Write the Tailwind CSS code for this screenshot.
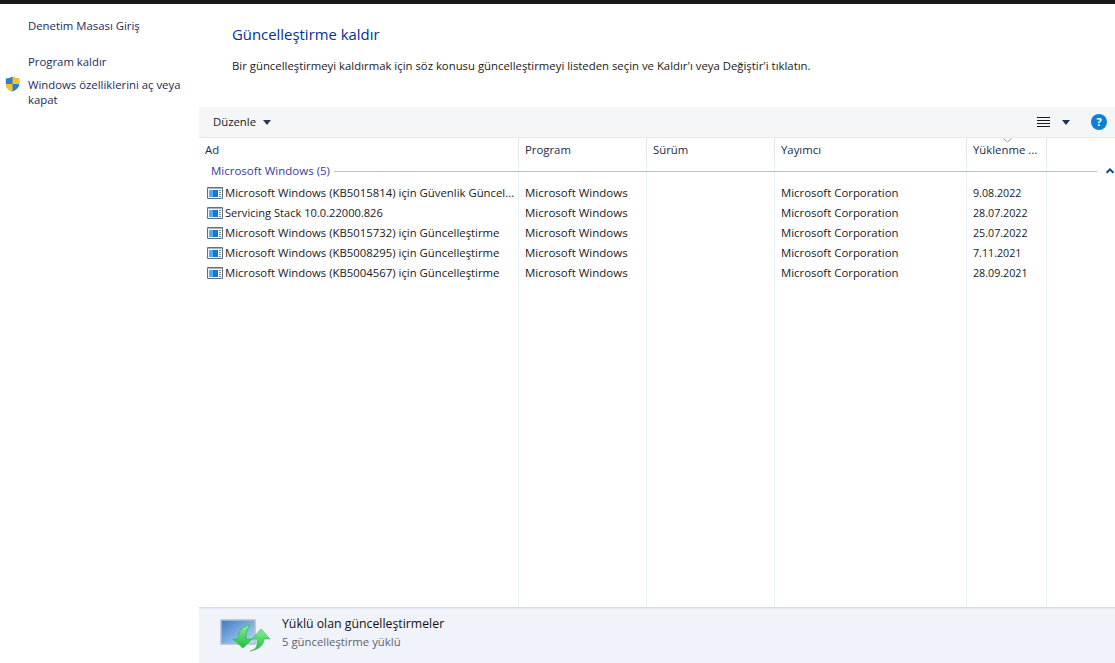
<!DOCTYPE html>
<html lang="tr">
<head>
<meta charset="UTF-8">
<title>Güncelleştirme kaldır</title>
<script src="https://cdn.jsdelivr.net/npm/@tailwindcss/browser@4"></script>
</head>
<body class="w-[1115px] h-[663px] overflow-hidden bg-white font-['Open_Sans','Noto_Sans',sans-serif] text-[11.35px] text-[#1a1a1a]">
<svg width="0" height="0" class="absolute">
  <symbol id="upd" viewBox="0 0 16 12">
    <path d="M0.5 0.5H15.5V11.5H0.5Z" fill="#f7f8fa" stroke="#62707e"/>
    <path d="M1 1.5h14" stroke="#aab4be"/>
    <rect x="2" y="3" width="9" height="7" fill="#1477d4"/>
    <rect x="2" y="3" width="4" height="7" fill="#58a8ea"/>
    <path d="M12 3h2v1h-2zM12 5h2v1h-2zM12 7h2v1h-2zM12 9h2v1h-2z" fill="#7d8b98"/>
  </symbol>
</svg>
<div class="h-1 bg-[#191919]"></div>
<div class="flex h-[659px]">
  <aside class="w-[199px] shrink-0 pl-[28px] pr-3 pt-[14px] text-[#1c2a5c]">
    <div class="leading-[16px]">Denetim Masası Giriş</div>
    <div class="mt-[20px] leading-[16px]">Program kaldır</div>
    <div class="relative mt-[7px] leading-[15px]">
      <svg class="absolute left-[-23px] top-[-1px]" width="15" height="16" viewBox="0 0 15 16">
        <path d="M7.5 0.5C5.5 1.8 3 2.4 0.8 2.4V8c0 3.6 3 6 6.7 7.5 3.7-1.5 6.7-3.9 6.7-7.5V2.4C12 2.4 9.5 1.8 7.5 0.5Z" fill="#2a7fd4"/>
        <path d="M7.5 0.5C9.5 1.8 12 2.4 14.2 2.4V8H7.5Z" fill="#f7c325"/>
        <path d="M7.5 8H0.8c0 3.6 3 6 6.7 7.5Z" fill="#f7c325"/>
      </svg>
      Windows özelliklerini aç veya kapat
    </div>
  </aside>
  <main class="flex-1 flex flex-col min-w-0">
    <header class="h-[103px] pl-[33px] pt-[19px] shrink-0">
      <h1 class="text-[14.9px] leading-[22px] text-[#003399]">Güncelleştirme kaldır</h1>
      <p class="mt-[13px] leading-[16px] text-[#1a1a1a]">Bir güncelleştirmeyi kaldırmak için söz konusu güncelleştirmeyi listeden seçin ve Kaldır'ı veya Değiştir'i tıklatın.</p>
    </header>
    <div class="h-[31px] shrink-0 bg-[#f5f6f7] border-b border-[#e8e9eb] flex items-center pl-[14px] pr-[8px]">
      <span>Düzenle</span>
      <span class="ml-[7px] w-0 h-0 border-x-[4.5px] border-x-transparent border-t-[5px] border-t-[#2a3a55]"></span>
      <svg class="ml-auto" width="13" height="11" viewBox="0 0 13 11" stroke="#1a1a1a"><path d="M0 .5h13M0 3.5h13M0 6.5h13M0 9.5h13"/></svg>
      <span class="ml-[12px] w-0 h-0 border-x-[4.5px] border-x-transparent border-t-[5px] border-t-[#1c3357]"></span>
      <span class="ml-[21px] w-4 h-4 rounded-full bg-[#0f7fd6] text-white text-[11px] font-bold leading-4 text-center">?</span>
    </div>
    <section class="relative flex-1 min-h-0">
      <div class="absolute inset-0 grid grid-cols-[320px_128px_128px_192px_80px_1fr]">
        <div class="border-r border-[#e9f0f8]"></div>
        <div class="border-r border-[#e9f0f8]"></div>
        <div class="border-r border-[#e9f0f8]"></div>
        <div class="border-r border-[#e9f0f8]"></div>
        <div class="border-r border-[#e9f0f8]"></div>
      </div>
      <div class="relative grid grid-cols-[320px_128px_128px_192px_80px_1fr] h-[23px] leading-[24px] text-[#1c2a4c] bg-white">
        <div class="pl-[6px] border-r border-[#e5e5e5]">Ad</div>
        <div class="pl-[6px] border-r border-[#e5e5e5]">Program</div>
        <div class="pl-[6px] border-r border-[#e5e5e5]">Sürüm</div>
        <div class="pl-[6px] border-r border-[#e5e5e5]">Yayımcı</div>
        <div class="relative pl-[6px] border-r border-[#e5e5e5]">Yüklenme ...
          <svg class="absolute left-[36px] top-0" width="9" height="5" viewBox="0 0 9 5" fill="none" stroke="#9a9a9a"><path d="M.5.5l4 3.5 4-3.5"/></svg>
        </div>
        <div></div>
      </div>
      <div class="relative h-[20px] flex items-center pl-[12px] pr-[18px] text-[11.5px] text-[#3b3b99]">
        <span>Microsoft Windows (5)</span>
        <span class="ml-[4px] flex-1 h-px bg-[#b9bfdb]"></span>
        <svg class="absolute right-[1px] top-[7px]" width="8" height="6" viewBox="0 0 8 6" fill="none" stroke="#12408f" stroke-width="2"><path d="M.6 4.8L4 1.4l3.4 3.4"/></svg>
      </div>
      <div class="relative mt-[2px]">
        <div class="grid grid-cols-[320px_128px_128px_192px_80px_1fr] h-[20px] leading-[20px]">
          <div class="flex items-center pl-[8px]"><svg class="shrink-0 mr-[2px]" width="16" height="12"><use href="#upd"/></svg><span class="truncate pr-[2px]">Microsoft Windows (KB5015814) için Güvenlik Güncel...</span></div>
          <div class="pl-[6px] text-[11.5px]">Microsoft Windows</div><div></div>
          <div class="pl-[6px] text-[11.4px]">Microsoft Corporation</div>
          <div class="pl-[6px] text-[10.7px]">9.08.2022</div><div></div>
        </div>
        <div class="grid grid-cols-[320px_128px_128px_192px_80px_1fr] h-[20px] leading-[20px]">
          <div class="flex items-center pl-[8px]"><svg class="shrink-0 mr-[2px]" width="16" height="12"><use href="#upd"/></svg><span class="truncate pr-[2px] text-[11.1px]">Servicing Stack 10.0.22000.826</span></div>
          <div class="pl-[6px] text-[11.5px]">Microsoft Windows</div><div></div>
          <div class="pl-[6px] text-[11.4px]">Microsoft Corporation</div>
          <div class="pl-[6px] text-[10.7px]">28.07.2022</div><div></div>
        </div>
        <div class="grid grid-cols-[320px_128px_128px_192px_80px_1fr] h-[20px] leading-[20px]">
          <div class="flex items-center pl-[8px]"><svg class="shrink-0 mr-[2px]" width="16" height="12"><use href="#upd"/></svg><span class="truncate pr-[2px]">Microsoft Windows (KB5015732) için Güncelleştirme</span></div>
          <div class="pl-[6px] text-[11.5px]">Microsoft Windows</div><div></div>
          <div class="pl-[6px] text-[11.4px]">Microsoft Corporation</div>
          <div class="pl-[6px] text-[10.7px]">25.07.2022</div><div></div>
        </div>
        <div class="grid grid-cols-[320px_128px_128px_192px_80px_1fr] h-[20px] leading-[20px]">
          <div class="flex items-center pl-[8px]"><svg class="shrink-0 mr-[2px]" width="16" height="12"><use href="#upd"/></svg><span class="truncate pr-[2px]">Microsoft Windows (KB5008295) için Güncelleştirme</span></div>
          <div class="pl-[6px] text-[11.5px]">Microsoft Windows</div><div></div>
          <div class="pl-[6px] text-[11.4px]">Microsoft Corporation</div>
          <div class="pl-[6px] text-[10.7px]">7.11.2021</div><div></div>
        </div>
        <div class="grid grid-cols-[320px_128px_128px_192px_80px_1fr] h-[20px] leading-[20px]">
          <div class="flex items-center pl-[8px]"><svg class="shrink-0 mr-[2px]" width="16" height="12"><use href="#upd"/></svg><span class="truncate pr-[2px]">Microsoft Windows (KB5004567) için Güncelleştirme</span></div>
          <div class="pl-[6px] text-[11.5px]">Microsoft Windows</div><div></div>
          <div class="pl-[6px] text-[11.4px]">Microsoft Corporation</div>
          <div class="pl-[6px] text-[10.7px]">28.09.2021</div><div></div>
        </div>
      </div>
    </section>
    <footer class="h-[56px] shrink-0 bg-[#f0f3fa] border-t border-[#d5dcec] shadow-[inset_0_1px_0_#e3e8f3] flex items-center pl-[21px]">
      <svg class="shrink-0" width="50" height="36" viewBox="0 0 50 36">
        <defs><linearGradient id="scr" x1="0" y1="0" x2="1" y2="1"><stop offset="0" stop-color="#3f78c8"/><stop offset="1" stop-color="#b4e0f6"/></linearGradient>
        <linearGradient id="grn" x1="0" y1="0" x2="0" y2="1"><stop offset="0" stop-color="#8ee89a"/><stop offset="1" stop-color="#18c23c"/></linearGradient></defs>
        <rect x="1" y="2" width="34" height="24" fill="url(#scr)" stroke="#b5bdc6" stroke-width="1.5"/>
        <path d="M30 7C22 8 18 13 18 21H13L23 30 32 21H26C26 15 27 11 30 7Z" fill="url(#grn)" stroke="#1fa93c" stroke-width=".5"/>
        <path d="M30 33C38 31 37 27 37 21H32L41 11 50 21H44C44 27 38 32 30 33Z" fill="url(#grn)" stroke="#1fa93c" stroke-width=".5"/>
      </svg>
      <div class="ml-[12px] mb-[6px]">
        <div class="text-[12.3px] leading-[18px] text-[#111]">Yüklü olan güncelleştirmeler</div>
        <div class="mt-px leading-[16px] text-[#5c6470]">5 güncelleştirme yüklü</div>
      </div>
    </footer>
  </main>
</div>
</body>
</html>
